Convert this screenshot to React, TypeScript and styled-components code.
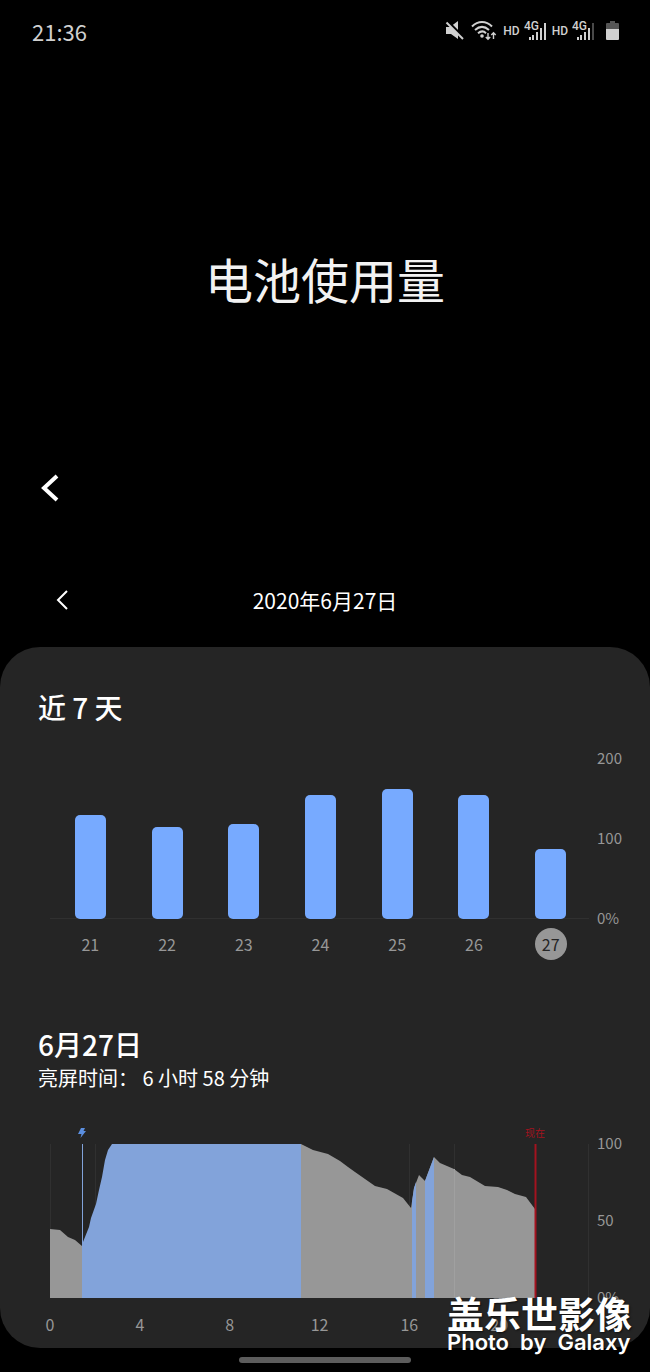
import React from "react";
import styled, { createGlobalStyle } from "styled-components";

const GlobalStyle = createGlobalStyle`
  * { box-sizing: border-box; }
  body {
    margin: 0;
    background: #000;
    color: #fff;
    font-family: "Noto Sans CJK SC", sans-serif;
  }
  h1, h2, p { margin: 0; }
`;

const Page = styled.div`
  position: relative;
  display: flex;
  flex-direction: column;
  overflow: hidden;
`;

const StatusBar = styled.header`
  display: flex;
  align-items: center;
  justify-content: space-between;
  height: 62px;
  padding: 0 31px 0 32px;
  color: #d0d0d0;
`;

const Clock = styled.time`
  font-size: 22px;
  line-height: 32px;
`;

const StatusIcons = styled.div`
  display: flex;
  align-items: center;
  gap: 6px;

  svg { display: block; }
`;

const Sim = styled.div`
  display: flex;
  align-items: center;
  gap: 4px;

  &:last-of-type { margin-right: 6px; }
`;

const Hd = styled.span`
  font-family: Roboto, sans-serif;
  font-size: 12px;
  font-weight: 500;
  line-height: 16px;
`;

const Title = styled.h1`
  padding: 184px 0 154px;
  font-size: 48px;
  font-weight: 400;
  line-height: 64px;
  text-align: center;
  color: #f2f2f2;
`;

const Toolbar = styled.nav`
  display: flex;
  padding: 0 26px;
`;

const IconButton = styled.button`
  display: grid;
  place-items: center;
  width: 48px;
  height: 48px;
  padding: 0;
  border: 0;
  background: none;
  color: #fff;
  cursor: pointer;
`;

const DateRow = styled.div`
  display: grid;
  grid-template-columns: 1fr auto 1fr;
  align-items: center;
  padding: 64px 38px 23px;
`;

const DateText = styled.span`
  font-size: 21px;
  line-height: 32px;
`;

const Panel = styled.main`
  padding: 42px 27px 13px 38px;
  border-radius: 40px;
  background: #252525;
`;

const Heading = styled.h2`
  font-size: 28px;
  font-weight: 500;
  line-height: 36px;
`;

const SubHeading = styled.p`
  margin-top: 2px;
  font-size: 20px;
  line-height: 28px;
`;

const Section = styled.section`
  & + & { margin-top: 66px; }
`;

const ChartRow = styled.div<{ $top: number }>`
  display: grid;
  grid-template-columns: minmax(0, 1fr) 26px;
  column-gap: 8px;
  margin-top: ${(p) => p.$top}px;
  padding-left: 12px;
`;

const Scale = styled.div`
  display: flex;
  flex-direction: column;
  justify-content: space-between;
  margin: -11px 0 -9px;
  font-size: 15px;
  line-height: 20px;
  color: #979797;
`;

const Bars = styled.div`
  display: grid;
  grid-template-columns: repeat(7, 1fr);
  align-items: end;
  justify-items: center;
  height: 160px;
  padding-left: 2px;
  background: linear-gradient(#303030, #303030) bottom / 100% 1px no-repeat;
`;

const Bar = styled.div`
  width: 31px;
  border-radius: 5px;
  background: #77aaff;
`;

const Days = styled.div`
  display: grid;
  grid-template-columns: repeat(7, 1fr);
  justify-items: center;
  margin-top: 9px;
  padding-left: 2px;
`;

const Day = styled.span<{ $selected: boolean }>`
  width: 32px;
  border-radius: 50%;
  background: ${(p) => (p.$selected ? "#979797" : "transparent")};
  color: ${(p) => (p.$selected ? "#252525" : "#979797")};
  font-size: 16px;
  line-height: 32px;
  text-align: center;
`;

const Plot = styled.div`
  position: relative;
  height: 154px;

  > svg {
    display: block;
    width: 100%;
    height: 100%;
    overflow: visible;
  }
`;

const Marker = styled.div`
  position: absolute;
  bottom: 100%;
  display: flex;
  align-items: center;
  height: 22px;
  transform: translateX(-50%);
  font-size: 10px;
  line-height: 20px;
  white-space: nowrap;
  color: #a3131f;
`;

const Hours = styled.div`
  display: grid;
  grid-template-columns: repeat(6, 1fr);
  margin-top: 16px;
  padding-bottom: 1px;
`;

const Hour = styled.span`
  display: flex;
  justify-content: center;
  width: 0;
  font-size: 16px;
  line-height: 20px;
  color: #979797;
`;

const HomeHandle = styled.div`
  align-self: center;
  width: 172px;
  height: 6px;
  margin: 9px 0;
  border-radius: 3px;
  background: #5c5c5c;
`;

const Watermark = styled.div`
  position: absolute;
  right: 18px;
  bottom: 18px;
  text-shadow: 1px 1px 2px rgba(0, 0, 0, 0.6);
`;

const WatermarkName = styled.p`
  font-size: 37px;
  font-weight: 700;
  line-height: 34px;
`;

const WatermarkCredit = styled.p`
  font-family: Inter, sans-serif;
  font-size: 22px;
  font-weight: 600;
  line-height: 24px;
  white-space: pre;
`;

const week = [
  { day: 21, used: 130 },
  { day: 22, used: 115 },
  { day: 23, used: 119 },
  { day: 24, used: 155 },
  { day: 25, used: 162 },
  { day: 26, used: 155 },
  { day: 27, used: 87 },
];

const MuteIcon = () => (
  <svg width="20" height="22" viewBox="0 0 20 22" fill="currentColor" aria-label="静音">
    <path d="M1 7h4l8-6v18l-7-5H1z" />
    <path d="M1 0L19 18" stroke="#000" strokeWidth="3" />
    <path d="M1.500 2.500L18 19" stroke="currentColor" strokeWidth="2" />
  </svg>
);

const WifiIcon = () => (
  <svg width="26" height="22" viewBox="0 0 26 22" fill="none" stroke="currentColor" strokeWidth="2" aria-label="Wi-Fi">
    <path d="M1 6.500C7 .5 15 .5 21 6.500M4 10c4.500-4 9.500-4 14 0M7 13.200c3-2.500 5.500-2.500 8 0" />
    <circle cx="11" cy="16" r="1.800" fill="currentColor" stroke="none" />
    <path d="M17 13v6M14.800 17l2.200 2.300 2.200-2.300M22.500 19v-6M20.300 15l2.200-2.300 2.200 2.300" strokeWidth="1.400" />
  </svg>
);

const SignalIcon = ({ weak }: { weak?: boolean }) => (
  <svg width="22" height="22" viewBox="0 0 22 22" fill="currentColor" aria-label="4G">
    <text x="0" y="10" fontFamily="Roboto, sans-serif" fontSize="12" fontWeight="500">4G</text>
    <path d="M5 17h2v3H5zM8 15h2v5H8zM12 12h2v8h-2zM16 8h2v12h-2z" />
    <path d="M20 3h2v17h-2z" opacity={weak ? 0.35 : 1} />
  </svg>
);

const BatteryIcon = () => (
  <svg width="13" height="20" viewBox="0 0 13 20" aria-label="电池">
    <path d="M4 0h5v2h3a1 1 0 0 1 1 1v6H0V3a1 1 0 0 1 1-1h3z" fill="#555" />
    <path d="M0 8h13v10a1 1 0 0 1-1 1H1a1 1 0 0 1-1-1z" fill="currentColor" />
  </svg>
);

const BatteryLevel = () => (
  <svg viewBox="0 0 539 154" preserveAspectRatio="none" role="img" aria-label="电池电量">
    <path d="M.5 0v154M45.500 0v154M359.500 0v154M404.500 0v154M538.500 0v154" stroke="#303030" />
    <path d="M0 154V85L10 86L18 93L25 96L32 102V154z" fill="#979797" />
    <path d="M32 154V102L33 98L39 83L41 74L46 60L49 46L52 33L55 16L58 6L62 0H251V154z" fill="#82a3da" />
    <path
      d="M251 154V0L263 6L278 10L290 17L298 23L305 28L325 42L337 45L353 54L361 64L364 44L369 31L372 34L375 37L384 13L390 19L404 25L412 31L420 33L435 42L448 43L457 46L465 50L476 53L485 65V154z"
      fill="#979797"
    />
    <path d="M362 154V58L364 44L366 38V154zM375 154V37L384 13V154z" fill="#82a3da" />
    <path d="M404.500 25v129" stroke="#a0a0a0" />
    <path d="M32.500 0v154" stroke="#82a3da" />
    <path d="M485.500 0v154" stroke="#a3131f" strokeWidth="2" />
  </svg>
);

export default function App() {
  return (
    <Page>
      <GlobalStyle />
      <StatusBar>
        <Clock>21:36</Clock>
        <StatusIcons>
          <MuteIcon />
          <WifiIcon />
          <Sim>
            <Hd>HD</Hd>
            <SignalIcon />
          </Sim>
          <Sim>
            <Hd>HD</Hd>
            <SignalIcon weak />
          </Sim>
          <BatteryIcon />
        </StatusIcons>
      </StatusBar>

      <Title>电池使用量</Title>

      <Toolbar>
        <IconButton type="button" aria-label="返回">
          <svg width="20" height="28" viewBox="0 0 20 28" fill="none" stroke="currentColor" strokeWidth="4">
            <path d="M17 2L4 14L17 26" />
          </svg>
        </IconButton>
      </Toolbar>

      <DateRow>
        <IconButton type="button" aria-label="前一天">
          <svg width="12" height="20" viewBox="0 0 12 20" fill="none" stroke="currentColor" strokeWidth="2">
            <path d="M11 1L2 10L11 19" />
          </svg>
        </IconButton>
        <DateText>2020年6月27日</DateText>
      </DateRow>

      <Panel>
        <Section>
          <Heading>近 7 天</Heading>
          <ChartRow $top={34}>
            <Bars>
              {week.map(({ day, used }) => (
                <Bar key={day} style={{ height: `${used / 2}%` }} />
              ))}
            </Bars>
            <Scale>
              <span>200</span>
              <span>100</span>
              <span>0%</span>
            </Scale>
            <Days>
              {week.map(({ day }) => (
                <Day key={day} $selected={day === 27}>{day}</Day>
              ))}
            </Days>
          </ChartRow>
        </Section>

        <Section>
          <Heading>6月27日</Heading>
          <SubHeading>亮屏时间： 6 小时 58 分钟</SubHeading>
          <ChartRow $top={52}>
            <Plot>
              <BatteryLevel />
              <Marker style={{ left: "6%" }}>
                <svg width="8" height="10" viewBox="0 0 8 10" fill="#5b8fe0">
                  <path d="M3 0h4L5.500 3H8L2.500 10L3.500 6H0z" />
                </svg>
              </Marker>
              <Marker style={{ left: "90%" }}>现在</Marker>
            </Plot>
            <Scale>
              <span>100</span>
              <span>50</span>
              <span>0%</span>
            </Scale>
            <Hours>
              {[0, 4, 8, 12, 16, 20].map((hour) => (
                <Hour key={hour}>{hour}</Hour>
              ))}
            </Hours>
          </ChartRow>
        </Section>
      </Panel>

      <HomeHandle />

      <Watermark>
        <WatermarkName>盖乐世影像</WatermarkName>
        <WatermarkCredit>Photo  by  Galaxy</WatermarkCredit>
      </Watermark>
    </Page>
  );
}
